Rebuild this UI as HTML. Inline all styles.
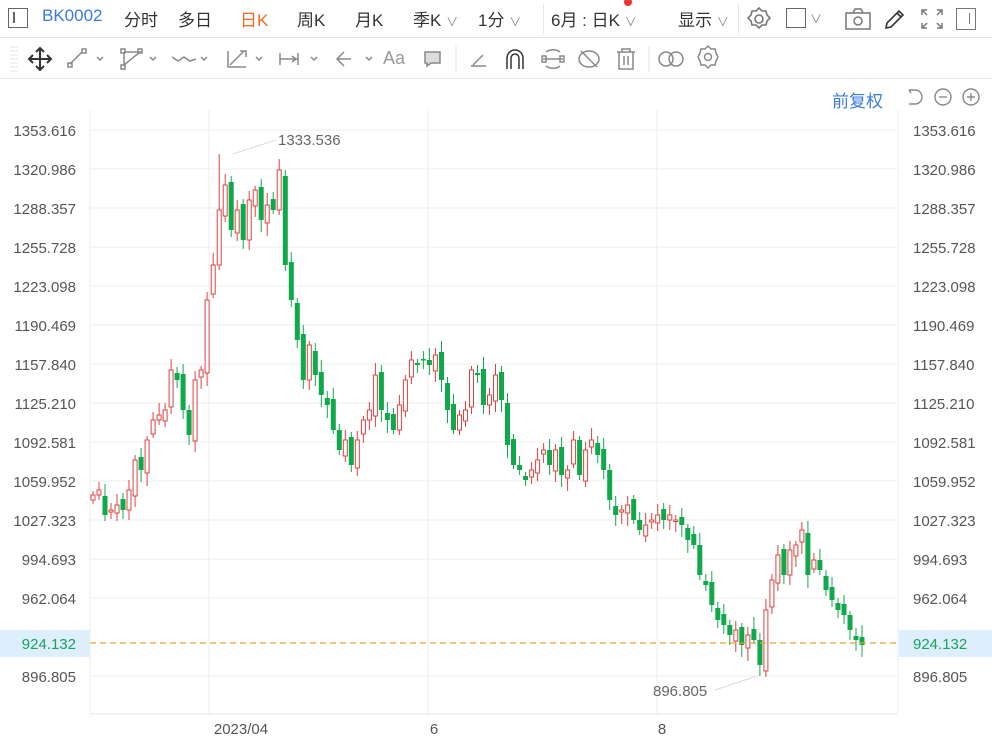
<!DOCTYPE html>
<html><head><meta charset="utf-8"><style>
*{margin:0;padding:0;box-sizing:border-box}
body{width:992px;height:740px;background:#fff;font-family:"Liberation Sans","Noto Sans CJK SC",sans-serif;position:relative;overflow:hidden;color:#333}
.t{position:absolute;white-space:nowrap}
.top{position:absolute;left:0;top:0;width:992px;height:38px;border-bottom:1px solid #e6e6e6}
.bar2{position:absolute;left:0;top:39px;width:992px;height:40px;border-bottom:1px solid #e6e6e6}
.tab{font-size:17px;top:6px;color:#333}
</style></head><body>
<div class="top">
<div class="t" style="left:8px;top:8px;width:20px;height:20px;border:1.5px solid #666"><div style="position:absolute;left:4px;top:3px;width:1.5px;height:11px;background:#666"></div></div>
<div class="t tab" style="left:42px;color:#3b7be0">BK0002</div>
<div class="t tab" style="left:124px">分时</div>
<div class="t tab" style="left:178px">多日</div>
<div class="t tab" style="left:240px;color:#f56a1e">日K</div>
<div class="t tab" style="left:297px">周K</div>
<div class="t tab" style="left:355px">月K</div>
<div class="t tab" style="left:413px">季K <span style="font-size:12px;color:#888">∨</span></div>
<div class="t tab" style="left:478px">1分 <span style="font-size:12px;color:#888">∨</span></div>
<div class="t" style="left:543px;top:4px;width:1px;height:30px;background:#e6e6e6"></div>
<div class="t tab" style="left:551px">6月 : 日K <span style="font-size:12px;color:#888">∨</span></div>
<div class="t" style="left:624px;top:-2px;width:8px;height:8px;border-radius:50%;background:#e33"></div>
<div class="t tab" style="left:678px">显示 <span style="font-size:12px;color:#888">∨</span></div>
<div class="t" style="left:738px;top:4px;width:1px;height:30px;background:#e6e6e6"></div>
<svg class="t" style="left:746px;top:6px" width="26" height="26" viewBox="0 0 26 26" fill="none" stroke="#777" stroke-width="1.6"><path d="M13 2l3 3 4 0 1 4 3 3-3 3-1 4-4 0-3 3-3-3-4 0-1-4-3-3 3-3 1-4 4 0z"/><circle cx="13" cy="13" r="4"/></svg>
<div class="t" style="left:786px;top:8px;width:20px;height:20px;border:1.5px solid #666"></div>
<div class="t" style="left:810px;top:10px;font-size:12px;color:#888">∨</div>
<svg class="t" style="left:845px;top:8px" width="26" height="22" viewBox="0 0 26 22" fill="none" stroke="#777" stroke-width="1.5"><rect x="1" y="5" width="24" height="16"/><path d="M8 5l2-4h6l2 4"/><circle cx="13" cy="13" r="4"/></svg>
<svg class="t" style="left:883px;top:7px" width="24" height="24" viewBox="0 0 24 24" fill="none" stroke="#333" stroke-width="1.6"><path d="M3 21l1-5L16 4l4 4L8 20z M14 6l4 4"/></svg>
<svg class="t" style="left:920px;top:8px" width="24" height="22" viewBox="0 0 24 22" fill="none" stroke="#777" stroke-width="1.5"><path d="M2 7V2h5M17 2h5v5M22 15v5h-5M7 20H2v-5M2 2l5 5M22 2l-5 5M22 20l-5-5M2 20l5-5"/></svg>
<div class="t" style="left:956px;top:8px;width:20px;height:22px;border:1.5px solid #777"><div style="position:absolute;right:5px;top:4px;width:1.5px;height:11px;background:#777"></div></div>
</div>
<div class="bar2">
<svg class="t" style="left:0;top:0" width="730" height="40" fill="none" stroke="#888" stroke-width="1.5">
<path d="M10 8h8M10 12h8M10 16h8M10 20h8M10 24h8M10 28h8M10 32h8" stroke="#e4e4e4" stroke-width="1"/>
<path d="M40 10v20M30 20h20M36 13l4-4 4 4M36 27l4 4 4-4M33 16l-4 4 4 4M47 16l4 4-4 4" stroke="#333" stroke-width="2"/>
<path d="M70 25l12-12" /><rect x="68" y="24" width="4" height="4"/><rect x="82" y="10" width="4" height="4"/><path d="M97 18l3 3 3-3" />
<path d="M124 14v12l16-13h-16" /><rect x="121" y="10" width="4" height="4"/><rect x="121" y="26" width="4" height="4"/><rect x="138" y="10" width="4" height="4"/><path d="M150 18l3 3 3-3"/>
<path d="M172 18l6 4 6-4 6 4 6-2"/><path d="M201 18l3 3 3-3"/>
<path d="M228 12v16h18M230 26l14-14M240 12h6v6"/><path d="M256 18l3 3 3-3"/>
<path d="M280 14v12M280 20h18M298 14v12M292 17l4 3-4 3"/><path d="M311 18l3 3 3-3"/>
<path d="M344 13l-7 7 7 7M337 20h14"/><path d="M366 18l3 3 3-3"/>
<path d="M425 13h15v11h-9l-4 3v-3h-2z" fill="#ddd"/>
<path d="M456 7v26" stroke="#e6e6e6" stroke-width="1"/>
<path d="M471 27h15M473 26l10-10"/>
<path d="M507 30V19a8 8 0 0 1 16 0v11M511 30V19a4 4 0 0 1 8 0v11" stroke="#333"/>
<path d="M543 20h20M546 13a10 8 0 0 1 14 0M546 27a10 8 0 0 0 14 0"/><rect x="542" y="17" width="4" height="6"/><rect x="560" y="17" width="4" height="6"/>
<ellipse cx="589" cy="20" rx="10" ry="8"/><path d="M581 12l16 16"/>
<path d="M617 13h18M622 13v-3h8v3M619 13v17h14V13M624 17v9M628 17v9"/>
<path d="M649 7v26" stroke="#e6e6e6" stroke-width="1"/>
<circle cx="666" cy="20" r="7"/><circle cx="676" cy="20" r="7"/>
<path d="M708 9l3 3 4 0 1 4 2 4-2 4-1 4-4 0-3 3-3-3-4 0-1-4-2-4 2-4 1-4 4 0z" transform="translate(0,-2)"/><circle cx="708" cy="18" r="3.5"/>
</svg>
<div class="t" style="left:383px;top:9px;font-size:18px;color:#999">Aa</div>
</div>
<div class="t" style="left:832px;top:87px;font-size:17px;color:#3b7be0">前复权</div>
<svg class="t" style="left:903px;top:86px" width="80" height="22" fill="none" stroke="#888" stroke-width="1.4"><path d="M6 4h6a7 7 0 0 1 0 14H6M6 4l2 3"/><circle cx="40" cy="11" r="8"/><path d="M36 11h8"/><circle cx="68" cy="11" r="8"/><path d="M64 11h8M68 7v8"/></svg>
<svg id="ch" class="t" style="left:0;top:0" width="992" height="740"></svg>
<script>
(function(){
var s='';
var prices=['1353.616','1320.986','1288.357','1255.728','1223.098','1190.469','1157.840','1125.210','1092.581','1059.952','1027.323','994.693','962.064'];
s+='<rect x="0" y="630" width="90" height="27" fill="#ddeefc"/><rect x="899" y="630" width="93" height="27" fill="#ddeefc"/>';
for(var i=0;i<prices.length;i++){var y=130+i*39;s+='<line x1="90" x2="898" y1="'+y+'" y2="'+y+'" stroke="#eeeeee"/>';
s+='<text x="76" y="'+(y+6)+'" text-anchor="end" font-size="15" fill="#555">'+prices[i]+'</text><text x="913" y="'+(y+6)+'" font-size="15" fill="#555">'+prices[i]+'</text>';}
s+='<line x1="90" x2="898" y1="676" y2="676" stroke="#eeeeee"/><text x="76" y="682" text-anchor="end" font-size="15" fill="#555">896.805</text><text x="913" y="682" font-size="15" fill="#555">896.805</text>';
s+='<text x="76" y="649" text-anchor="end" font-size="15" fill="#1aa35a">924.132</text><text x="913" y="649" font-size="15" fill="#1aa35a">924.132</text>';
[209,428,657].forEach(function(x){s+='<line x1="'+x+'" x2="'+x+'" y1="110" y2="714" stroke="#eeeeee"/>';});
s+='<line x1="90" x2="90" y1="110" y2="714" stroke="#eee"/><line x1="898" x2="898" y1="110" y2="714" stroke="#eee"/><line x1="90" x2="898" y1="714" y2="714" stroke="#e4e4e4"/>';
s+='<text x="241" y="734" text-anchor="middle" font-size="15" fill="#555">2023/04</text><text x="434" y="734" text-anchor="middle" font-size="15" fill="#555">6</text><text x="662" y="734" text-anchor="middle" font-size="15" fill="#555">8</text>';
var c=[495,490,515,510,505,510,490,460,470,440,420,415,410,370,380,410,435,380,370,300,265,210,185,230,210,240,200,190,220,205,210,170,265,300,340,380,345,375,395,405,430,450,440,465,440,420,410,375,410,420,430,405,380,360,365,360,365,355,380,410,430,415,410,370,375,405,395,375,400,445,465,470,480,470,460,450,465,450,475,470,440,475,450,440,455,470,500,515,510,505,520,530,525,520,515,520,515,520,525,540,545,575,585,605,620,625,635,630,645,635,640,665,610,580,555,575,550,545,530,575,560,570,590,600,610,615,630,640,645];
var sp=(862-93)/(c.length-1);
for(var i=0;i<c.length;i++){var x=93+i*sp;var o=i?c[i-1]+((i*7)%5-2)*3:500;var cl=c[i];var hi=Math.min(o,cl)-4-((i*13)%9);var lo=Math.max(o,cl)+4+((i*11)%10);
if(i==21)hi=154;if(i==111)lo=676;
var up=cl<o;var col=up?'#e0403f':'#0fa94c';var by=Math.min(o,cl),h=Math.max(Math.abs(o-cl),1.5);
s+='<line x1="'+x.toFixed(1)+'" x2="'+x.toFixed(1)+'" y1="'+hi+'" y2="'+lo+'" stroke="'+col+'"/>';
if(up)s+='<rect x="'+(x-2).toFixed(1)+'" y="'+by+'" width="4" height="'+h+'" fill="#fff" stroke="'+col+'"/>';
else s+='<rect x="'+(x-2.5).toFixed(1)+'" y="'+by+'" width="5" height="'+h+'" fill="'+col+'"/>';}
s+='<line x1="90" x2="898" y1="643" y2="643" stroke="#f0a030" stroke-dasharray="6,4" stroke-width="1.2"/>';
s+='<line x1="233" y1="154" x2="276" y2="140" stroke="#ddd"/><text x="278" y="145" font-size="15" fill="#666">1333.536</text>';
s+='<line x1="757" y1="676" x2="715" y2="690" stroke="#ddd"/><text x="653" y="696" font-size="15" fill="#666">896.805</text>';
document.getElementById('ch').innerHTML=s;
})();
</script>
</body></html>
